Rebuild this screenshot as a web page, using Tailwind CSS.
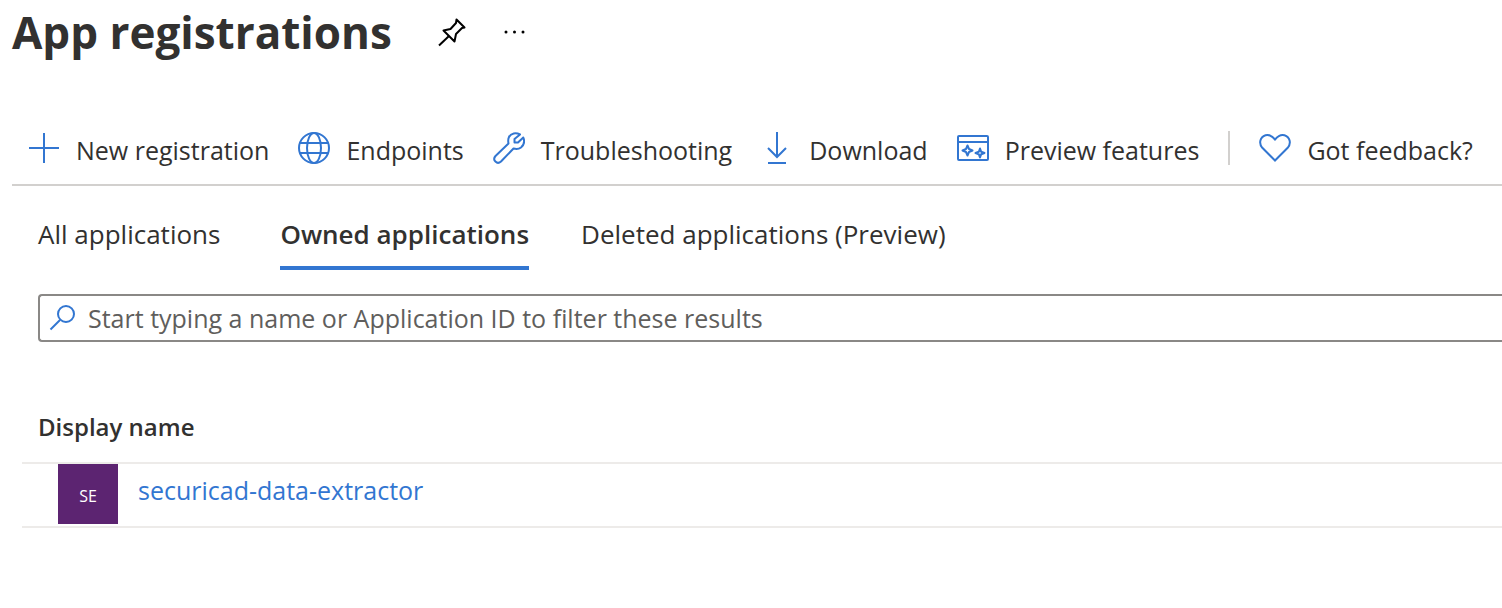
<!DOCTYPE html>
<html lang="en">
<head>
    <meta charset="UTF-8">
    <meta name="viewport" content="width=device-width, initial-scale=1.0">
    <title>App registrations</title>
    <script src="https://cdn.jsdelivr.net/npm/@tailwindcss/browser@4"></script>
</head>
<body class="bg-white text-[#323130] font-['Open_Sans','Noto_Sans',sans-serif] overflow-x-hidden">

    <!-- Page title -->
    <header class="flex items-center h-16 pl-3">
        <h1 class="text-[44px] leading-16 font-bold whitespace-nowrap">App registrations</h1>
        <button aria-label="Pin" class="ml-11 text-black">
            <svg class="size-8" viewBox="0 0 32 32" fill="none" stroke="currentColor" stroke-width="2" stroke-linejoin="round">
                <path d="M20.5 3.5 28.5 11.5 26 12 20 18 18.5 25.5 7.5 14.5 14.5 13 20 7Z" />
                <path d="M13 20 3 29.5" />
            </svg>
        </button>
        <button aria-label="More" class="ml-8 text-black">
            <svg class="size-8" viewBox="0 0 32 32" fill="currentColor">
                <circle cx="6" cy="16" r="1.5" /><circle cx="14.5" cy="16" r="1.5" /><circle cx="23" cy="16" r="1.5" />
            </svg>
        </button>
    </header>

    <!-- Command bar -->
    <nav class="flex items-center gap-[29px] mt-12 ml-3 pl-4 h-[74px] border-b-2 border-[#d2d0ce] text-[25px] whitespace-nowrap">
        <button class="flex items-center gap-4 shrink-0">
            <svg class="size-8 text-[#3276d1]" viewBox="0 0 32 32" fill="none" stroke="currentColor" stroke-width="2"><path d="M16 1V31M1 16H31" /></svg>
            <span class="pt-1.5">New registration</span>
        </button>
        <button class="flex items-center gap-4 shrink-0">
            <svg class="size-8 text-[#3276d1]" viewBox="0 0 32 32" fill="none" stroke="currentColor" stroke-width="2">
                <circle cx="16" cy="16" r="15" /><ellipse cx="16" cy="16" rx="7" ry="15" /><path d="M2 11H30M2 21H30" />
            </svg>
            <span class="pt-1.5">Endpoints</span>
        </button>
        <button class="flex items-center gap-4 shrink-0">
            <svg class="size-8 text-[#3276d1]" viewBox="0 0 32 32" fill="none" stroke="currentColor" stroke-width="2" stroke-linejoin="round">
                <path d="M27 2.5C23 0.300 18 1 16 5C15 7 15 9 15.5 11.5L2.5 24C-1 28 4 33 8 29.5L20.5 16.5C23 17.2 26 17 28 15.5C31 13 31.7 9 30.3 5.5L25 10.5 21.5 10.5 21.5 7Z" />
            </svg>
            <span class="pt-1.5">Troubleshooting</span>
        </button>
        <button class="flex items-center gap-4 shrink-0">
            <svg class="size-8 text-[#3276d1]" viewBox="0 0 32 32" fill="none" stroke="currentColor" stroke-width="2"><path d="M16 0V25M7 16 16 25 25 16M7 31H25" /></svg>
            <span class="pt-1.5">Download</span>
        </button>
        <button class="flex items-center gap-4 shrink-0">
            <svg class="size-8 text-[#3276d1]" viewBox="0 0 32 32" fill="none" stroke="currentColor" stroke-width="2" stroke-linejoin="round">
                <rect x="1" y="4" width="30" height="24" rx="1" /><path d="M1 10H31" />
                <path d="M10.5 13.5 12 17 15.5 18.5 12 20 10.5 23.5 9 20 5.5 18.5 9 17ZM23 16.5 24.2 19.8 27.5 21 24.2 22.2 23 25.5 21.8 22.2 18.5 21 21.8 19.8Z" />
            </svg>
            <span class="pt-1.5">Preview features</span>
        </button>
        <div class="w-[2px] h-[34px] bg-[#d2d0ce] shrink-0"></div>
        <button class="flex items-center gap-4 shrink-0">
            <svg class="size-8 text-[#3276d1]" viewBox="0 0 32 32" fill="none" stroke="currentColor" stroke-width="2">
                <path d="M16 28.5 3.3 15.8C-0.5 11.5 1 5 6.5 3.3C10 2.3 13 4 16 7.5C19 4 22 2.3 25.5 3.3C31 5 32.5 11.5 28.7 15.8Z" />
            </svg>
            <span class="pt-1.5">Got feedback?</span>
        </button>
    </nav>

    <!-- Tabs -->
    <div role="tablist" class="flex mt-4 ml-[38px] text-[26px] leading-16 whitespace-nowrap">
        <button role="tab" class="border-b-4 border-transparent">All applications</button>
        <button role="tab" aria-selected="true" class="ml-15 font-semibold border-b-4 border-[#3276d1]">Owned applications</button>
        <button role="tab" class="ml-13 border-b-4 border-transparent">Deleted applications (Preview)</button>
    </div>

    <!-- Filter -->
    <label class="flex items-center mt-6 ml-[38px] h-12 pl-2 gap-3 border-2 border-r-0 border-[#8a8886] rounded-l">
        <svg class="size-7 shrink-0 text-[#3276d1]" viewBox="0 0 28 28" fill="none" stroke="currentColor" stroke-width="2"><circle cx="18" cy="10" r="8" /><path d="M12 16 2.5 25.5" /></svg>
        <input type="text" aria-label="Filter applications" placeholder="Start typing a name or Application ID to filter these results" class="w-full pt-0.5 outline-none text-[25px] placeholder:text-[#605e5c]">
    </label>

    <!-- Results -->
    <table class="w-full mt-12">
        <thead>
            <tr>
                <th class="h-[72px] pt-0.5 pl-[38px] text-left text-[24px] font-semibold">Display name</th>
            </tr>
        </thead>
        <tbody>
            <tr>
                <td class="pl-[22px]">
                    <div class="flex items-center h-[66px] pl-9 gap-5 border-y-2 border-[#edebe9]">
                        <span class="flex items-center justify-center size-[60px] pt-1 mb-0.5 shrink-0 bg-[#5c2471] text-white text-base">SE</span>
                        <a href="#" class="mb-2 text-[25px] text-[#3276d1]">securicad-data-extractor</a>
                    </div>
                </td>
            </tr>
        </tbody>
    </table>

</body>
</html>
